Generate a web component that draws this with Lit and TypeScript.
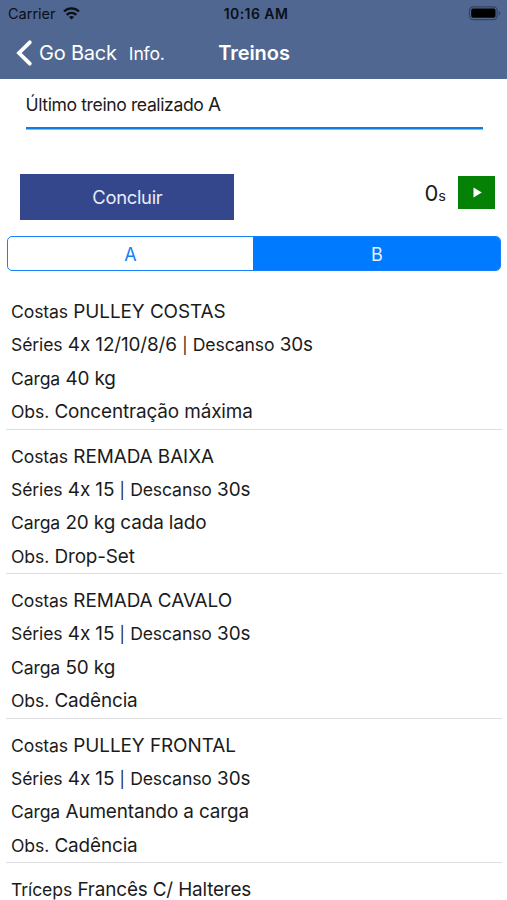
import { LitElement, html, css } from "lit";
import { customElement, property } from "lit/decorators.js";

interface Exercise {
  group: string;
  name: string;
  sets: string;
  rest: string;
  load: string;
  note: string;
}

const EXERCISES: Exercise[] = [
  { group: "Costas", name: "PULLEY COSTAS", sets: "4x 12/10/8/6", rest: "30s", load: "40 kg", note: "Concentração máxima" },
  { group: "Costas", name: "REMADA BAIXA", sets: "4x 15", rest: "30s", load: "20 kg cada lado", note: "Drop-Set" },
  { group: "Costas", name: "REMADA CAVALO", sets: "4x 15", rest: "30s", load: "50 kg", note: "Cadência" },
  { group: "Costas", name: "PULLEY FRONTAL", sets: "4x 15", rest: "30s", load: "Aumentando a carga", note: "Cadência" },
  { group: "Tríceps", name: "Francês C/ Halteres", sets: "", rest: "", load: "", note: "" },
];

@customElement("nav-header")
export class NavHeader extends LitElement {
  static styles = css`
    :host { display: flex; flex-direction: column; height: 79px; background: #506891; }
    .status { display: grid; grid-template-columns: 1fr auto 1fr; align-items: center; height: 27px; padding: 0 6px 0 8px; font-size: 14.5px; color: #0b0f18; }
    .carrier { display: flex; align-items: center; gap: 7px; }
    .time { font-weight: 600; font-size: 14px; letter-spacing: 0.45px; margin-left: 3px; }
    .battery { justify-self: end; display: block; }
    .bar { display: grid; grid-template-columns: 1fr auto 1fr; align-items: center; height: 50px; padding: 1px 14px 0 15px; color: #fff; }
    .left { display: flex; align-items: center; white-space: nowrap; }
    .back { font-size: 20px; margin-left: 6px; letter-spacing: -0.2px; }
    .info { font-size: 17.6px; margin-left: 12px; letter-spacing: -0.2px; }
    .title { font-size: 20px; font-weight: 600; letter-spacing: -0.05px; }
  `;
  render() {
    return html`
      <div class="status">
        <div class="carrier">
          <span>Carrier</span>
          <svg width="17" height="13" viewBox="0 0 17 13" fill="none" stroke="#0b0f18" stroke-width="2.3">
            <path d="M1 4.500C5.200 0.400 11.800 0.400 16 4.500" />
            <path d="M3.700 7.800C6.400 5.200 10.600 5.200 13.300 7.800" />
            <path d="M8.500 12.600L5.900 10C7.400 8.700 9.600 8.700 11.100 10Z" fill="#0b0f18" stroke="none" />
          </svg>
        </div>
        <span class="time">10:16 AM</span>
        <svg class="battery" width="33" height="15" viewBox="0 0 33 15">
          <rect x="1.500" y="0.900" width="27.600" height="12.700" rx="3.600" fill="none" stroke="#34435f" stroke-width="1.200" />
          <rect x="3.200" y="2.600" width="24.300" height="9.200" rx="1.800" fill="#000" />
          <path d="M30.600 5C32.800 5.800 32.800 8.700 30.600 9.500Z" fill="#34435f" />
        </svg>
      </div>
      <div class="bar">
        <div class="left">
          <svg width="18" height="28" viewBox="0 0 18 28" fill="none" stroke="#fff" stroke-width="3.800" stroke-linecap="round">
            <path d="M14.800 3.300L4 14L14.800 24.700" />
          </svg>
          <span class="back">Go Back</span>
          <span class="info">Info.</span>
        </div>
        <span class="title">Treinos</span>
      </div>
    `;
  }
}

@customElement("exercise-item")
export class ExerciseItem extends LitElement {
  @property({ attribute: false }) item!: Exercise;

  static styles = css`
    :host { display: block; margin: 0 5px 0 6px; padding: 10px 5px 0; border-bottom: 1.200px solid #dedee0; height: 133.500px; color: #1b1b1b; }
    .line { height: 33.350px; line-height: 33.350px; font-size: 17.600px; letter-spacing: -0.120px; word-spacing: 0.500px; white-space: nowrap; }
    .value { font-size: 18.900px; letter-spacing: -0.120px; word-spacing: 0; }
    .value.name { letter-spacing: -0.160px; }
    .value.caps { letter-spacing: -0.060px; }
    .pipe { font-size: 16px; }
  `;
  render() {
    const { group, name, sets, rest, load, note } = this.item;
    const nameClass = name === name.toUpperCase() ? "value caps" : "value name";
    return html`
      <div class="line">${group} <span class=${nameClass}>${name}</span></div>
      ${sets
        ? html`
            <div class="line">Séries <span class="value">${sets}</span> <span class="pipe">|</span> Descanso <span class="value">${rest}</span></div>
            <div class="line">Carga <span class="value">${load}</span></div>
            <div class="line">Obs. <span class="value">${note}</span></div>
          `
        : ""}
    `;
  }
}

@customElement("app-root")
export class AppRoot extends LitElement {
  static styles = css`
    :host { display: block; height: 900px; overflow: hidden; background: #fff; color: #1b1b1b; font-family: Inter, "Liberation Sans", sans-serif; }
    .last { margin: 0 24.500px 0 25.500px; height: 48px; line-height: 51px; border-bottom: 2px solid #0f7de6; box-shadow: 0 0.500px 0 #0f7de6; font-size: 17.600px; letter-spacing: -0.400px; }
    .last-value { font-size: 18.900px; }
    .actions { display: flex; align-items: flex-start; justify-content: space-between; height: 62px; padding: 45px 12px 0 20.400px; }
    .finish { width: 214px; height: 46px; line-height: 47px; background: #35478c; color: #e9ecf8; text-align: center; font-size: 18.400px; letter-spacing: -0.300px; }
    .timer { display: flex; align-items: center; gap: 12px; margin-top: 2px; }
    .count { font-size: 22px; }
    .unit { font-size: 14.500px; }
    .play { display: flex; align-items: center; justify-content: center; box-sizing: border-box; padding-left: 1px; width: 37px; height: 33px; background: #058205; }
    .tabs { display: flex; box-sizing: border-box; margin: 0 6px 0 7px; height: 35px; border: 1.400px solid #1680fb; border-radius: 5px; overflow: hidden; font-size: 18px; line-height: 35px; text-align: center; color: #1680ee; }
    .tab { width: 245px; }
    .tab.active { flex: 1; padding-left: 1px; background: #007aff; color: #e4f0ff; }
    .list { padding-top: 14px; }
  `;
  render() {
    return html`
      <nav-header></nav-header>
      <div class="last">Último treino realizado <span class="last-value">A</span></div>
      <div class="actions">
        <div class="finish">Concluir</div>
        <div class="timer">
          <span><span class="count">0</span><span class="unit">s</span></span>
          <div class="play">
            <svg width="9" height="11" viewBox="0 0 9 11"><path d="M0.500 0.500L8.800 5.500L0.500 10.500Z" fill="#fff" /></svg>
          </div>
        </div>
      </div>
      <div class="tabs">
        <div class="tab">A</div>
        <div class="tab active">B</div>
      </div>
      <div class="list">${EXERCISES.map((e) => html`<exercise-item .item=${e}></exercise-item>`)}</div>
    `;
  }
}
